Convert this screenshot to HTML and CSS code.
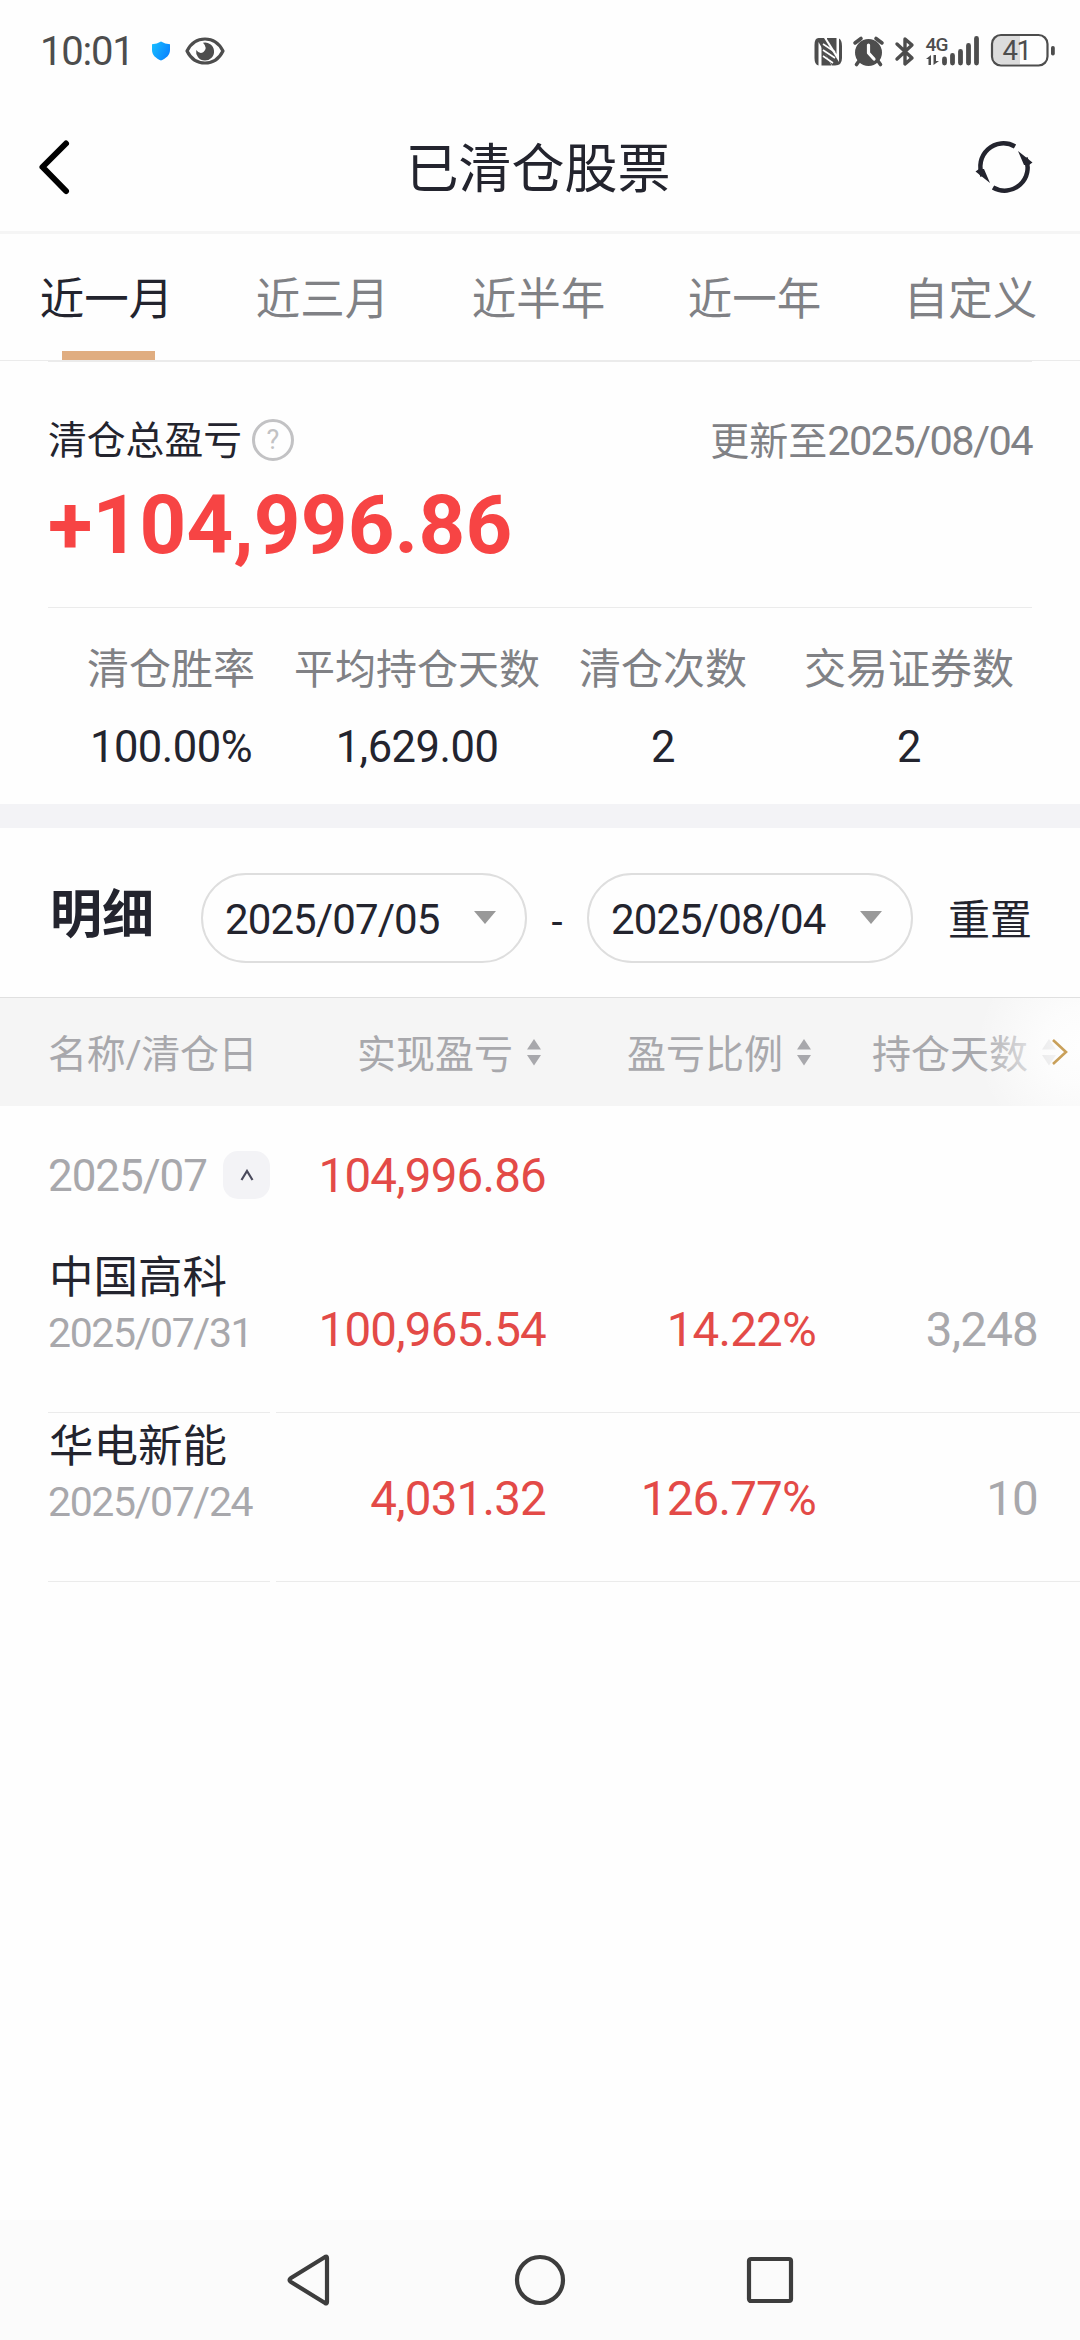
FILE: index.html
```html
<!DOCTYPE html>
<html lang="zh-CN">
<head>
<meta charset="utf-8">
<title>已清仓股票</title>
<link rel="stylesheet" href="styles.css">
</head>
<body>
<div class="screen">
  <div class="status">
    <span class="clock">10:01</span>
    <svg class="shield" width="20" height="20" viewBox="0 0 20 20"><defs><linearGradient id="g" x1="0" x2="1" y1="0" y2="0.5"><stop offset="0" stop-color="#18c0ff"/><stop offset="1" stop-color="#0a86ff"/></linearGradient></defs><path d="M10 0.5 Q14 3 19 3.2 V9 C19 14 15 17.500 10 19.500 C5 17.500 1 14 1 9 V3.200 Q6 3 10 0.500Z" fill="url(#g)"/></svg>
    <svg class="eye" width="40" height="28" viewBox="0 0 40 28"><path d="M2 14 C10 -2 30 -2 38 14 C30 30 10 30 2 14Z" fill="none" stroke="#4d4d4d" stroke-width="3.200" stroke-linejoin="round"/><path d="M18 5.800 A9 9 0 1 1 11.200 13 Q14.500 17.500 18.500 15 Q23 11 18 5.800Z" fill="#4d4d4d"/></svg>
    <div class="status-right">
      <svg class="sysicons" width="243" height="40" viewBox="813 31 243 40" fill="#4d4d4d">
        <path d="M818.500 38 H824 L839 62 V38.500 Q842 40 842 46 V58 Q842 65.500 835 65.500 H832 L818.500 42 V65.500 Q814.500 65 814.500 58 V45 Q814.500 38 818.500 38Z"/>
        <path d="M827 38 H836.500 V54 L827 39Z"/><path d="M821.500 46 L831.500 65.500 H821.500Z"/>
        <path d="M823 44 L835 52 M823 50 L835 58 M823 56 L833 63" stroke="#fff" stroke-width="1.600"/>
        <circle cx="868.500" cy="52.500" r="13.500"/><path d="M855 43 L861 38.500 M876 38.500 L882 43 M859 61 L856.500 64.500 M878 61 L880.500 64.500" stroke="#4d4d4d" stroke-width="3.600" stroke-linecap="round"/>
        <path d="M868.500 45 V53 L874 59" fill="none" stroke="#fff" stroke-width="3.200" stroke-linecap="round" stroke-linejoin="round"/>
        <path d="M897 44 L912 58 L905 64 V39 L912 45 L897 59" fill="none" stroke="#4d4d4d" stroke-width="3.400" stroke-linecap="round" stroke-linejoin="round"/>
        <text x="925.500" y="50.500" class="net">4G</text>
        <path d="M926 59 L931 55 V65 H928.500 V59Z M933.500 55 H936 V61 H939 L933.500 65Z"/>
        <path d="M944.500 59 V63 M952.500 55.500 V63 M960.500 51.500 V63 M968.500 45.500 V63 M976.500 38.500 V63" stroke="#4d4d4d" stroke-width="4.800" stroke-linecap="round"/>
        <path d="M1020 36 H1002 Q993 36 993 45 V55 Q993 64 1002 64 H1020Z" fill="#dcdcdc"/>
        <rect x="992" y="35" width="55.500" height="30.500" rx="9" fill="none" stroke="#4d4d4d" stroke-width="2.200"/>
        <rect x="1051" y="46" width="3.800" height="9.500" rx="1.800"/>
        <text x="1002.500" y="60" class="batt">41</text>
      </svg>
    </div>
  </div>

  <div class="titlebar">
    <svg class="back" width="36" height="60" viewBox="0 0 36 60"><path d="M30 6.500 L6.500 30 L30 54" fill="none" stroke="#000" stroke-width="6" stroke-linecap="round" stroke-linejoin="round"/></svg>
    <h1 class="title">已清仓股票</h1>
    <svg class="refresh" width="60" height="56" viewBox="0 0 60 56"><g fill="none" stroke="#23242e" stroke-width="4.500"><path d="M41 7.500 A23 23 0 0 0 8.500 37"/><path d="M19 48.500 A23 23 0 0 0 51.500 19"/></g><path d="M44 12 L58.500 23.500 L55 26 H50Z M16 44 L1.500 32.500 L5 30 H10Z" fill="#23242e"/></svg>
  </div>

  <div class="tabs">
    <span class="tab active">近一月</span><span class="tab">近三月</span><span class="tab">近半年</span><span class="tab">近一年</span><span class="tab">自定义</span>
  </div>

  <div class="summary">
    <div class="summary-top">
      <span class="sum-label">清仓总盈亏</span><span class="help">?</span>
      <span class="updated">更新至<span class="upd-date">2025/08/04</span></span>
    </div>
    <div class="total">+104,996.86</div>
    <div class="stats">
      <div class="stat"><span class="k">清仓胜率</span><span class="v">100.00%</span></div>
      <div class="stat"><span class="k k-long">平均持仓天数</span><span class="v">1,629.00</span></div>
      <div class="stat"><span class="k">清仓次数</span><span class="v">2</span></div>
      <div class="stat"><span class="k">交易证券数</span><span class="v">2</span></div>
    </div>
  </div>

  <div class="band"></div>

  <div class="filter">
    <h2 class="detail">明细</h2>
    <div class="pill"><span>2025/07/05</span><i class="down"></i></div>
    <span class="dash">-</span>
    <div class="pill"><span>2025/08/04</span><i class="down"></i></div>
    <span class="reset">重置</span>
  </div>

  <div class="thead row">
    <span class="th-name">名称/清仓日</span>
    <span class="th"><span>实现盈亏</span><svg class="sort" width="14" height="28" viewBox="0 0 14 28"><path d="M7 1 L14 11.500 H0Z M0 17 H14 L7 27.500Z"/></svg></span>
    <span class="th"><span>盈亏比例</span><svg class="sort" width="14" height="28" viewBox="0 0 14 28"><path d="M7 1 L14 11.500 H0Z M0 17 H14 L7 27.500Z"/></svg></span>
    <span class="th th-last"><span>持仓天数</span><svg class="sort" width="14" height="28" viewBox="0 0 14 28"><path d="M7 1 L14 11.500 H0Z M0 17 H14 L7 27.500Z"/></svg></span>
    <div class="fade"></div>
    <svg class="more" width="18" height="28" viewBox="0 0 18 28"><path d="M2 2 L15 14 L2 26" fill="none" stroke="#c9a05a" stroke-width="2.600"/></svg>
  </div>

  <div class="month row">
    <div class="month-name"><span>2025/07</span><span class="fold"><svg width="14" height="12" viewBox="0 0 14 12"><path d="M1.500 11 L7 2 L12.500 11" fill="none" stroke="#4a4a5c" stroke-width="2.200"/></svg></span></div>
    <span class="num red">104,996.86</span>
  </div>

  <div class="item row">
    <div class="stock"><span class="name">中国高科</span><span class="date">2025/07/31</span></div>
    <div class="figures"><span class="num red">100,965.54</span><span class="num red">14.22%</span><span class="num gray">3,248</span></div>
  </div>
  <div class="item row">
    <div class="stock"><span class="name">华电新能</span><span class="date">2025/07/24</span></div>
    <div class="figures"><span class="num red">4,031.32</span><span class="num red">126.77%</span><span class="num gray">10</span></div>
  </div>

  <div class="navbar">
    <svg width="50" height="54" viewBox="0 0 50 54"><path d="M42 5 V49 Q42 51 40 50 L6 29 Q3 27 6 25 L40 4 Q42 3 42 5Z" /></svg>
    <svg width="54" height="54" viewBox="0 0 54 54"><circle cx="27" cy="27" r="23"/></svg>
    <svg width="50" height="54" viewBox="0 0 50 54"><rect x="4" y="6" width="42" height="42" rx="2"/></svg>
  </div>
</div>
</body>
</html>
```
FILE: styles.css
```css
* { box-sizing: border-box; margin: 0; padding: 0; }
body {
  width: 1080px;
  background: #fefefe;
  color: #23242e;
  font-family: Roboto, "Noto Sans CJK SC", sans-serif;
}
svg { display: block; flex: none; }
.screen { width: 1080px; height: 2340px; display: flex; flex-direction: column; overflow: hidden; }

.status { height: 102px; display: flex; align-items: center; padding: 0 24px 0 40px; }
.clock { width: 111px; font-size: 40px; line-height: 48px; letter-spacing: -1.2px; color: #4d4d4d; padding-top: 1px; }
.eye { margin-left: 14px; }
.status-right { margin-left: auto; }
.sysicons { overflow: visible; }
.net { font: 500 19px Roboto, sans-serif; letter-spacing: -0.8px; }
.batt { font: 400 27.5px Roboto, sans-serif; letter-spacing: -1.5px; }

.titlebar { height: 132px; display: flex; align-items: center; justify-content: space-between; padding: 0 46px 0 36px; border-bottom: 3px solid #f5f5f5; }
.title { font-size: 53px; font-weight: 400; line-height: 72px; margin-left: 30px; padding-top: 7px; }

.tabs { height: 127px; display: grid; grid-template-columns: repeat(5, 1fr); border-bottom: 1px solid #ebebeb; }
.tab { display: flex; flex-direction: column; align-items: center; justify-content: space-between; padding-top: 33px; font-size: 44.500px; line-height: 66px; color: #808185; text-indent: -3px; }
.tab.active { color: #23242e; }
.tab.active::after { content: ""; width: 93px; height: 9px; background: #e0ad80; }

.summary { height: 443px; padding: 0 48px; }
.summary-top { height: 98px; display: flex; align-items: center; border-top: 1px solid #ebebeb; padding-top: 58px; }
.sum-label { font-size: 38.800px; line-height: 40px; margin-top: 2px; }
.help { width: 42px; height: 42px; margin-left: 10px; border: 3px solid #c2c2c4; border-radius: 50%; color: #c2c2c4; font-size: 27px; line-height: 37px; text-align: center; }
.updated { margin-left: auto; display: flex; align-items: baseline; font-size: 39px; line-height: 40px; color: #808185; padding-top: 4px; }
.upd-date { font-size: 41.500px; letter-spacing: -1.600px; }
.total { height: 149px; padding-top: 18px; border-bottom: 1px solid #ebebeb; font-size: 81.500px; font-weight: 700; line-height: 96px; letter-spacing: 0.200px; color: #f74444; }
.stats { display: grid; grid-template-columns: repeat(4, 246px); padding-top: 37px; }
.stat { display: flex; flex-direction: column; align-items: center; }
.k { font-size: 42px; line-height: 50px; color: #808185; white-space: nowrap; }
.k-long { font-size: 41px; }
.v { font-size: 43.500px; line-height: 54px; margin-top: 26px; letter-spacing: -0.500px; }

.band { height: 24px; background: #f3f3f6; }

.filter { height: 169px; display: flex; align-items: center; padding: 10px 48px 0 50px; }
.detail { width: 151px; font-size: 52px; font-weight: 700; line-height: 60px; margin-top: -3px; }
.pill { width: 326px; height: 90px; border: 2px solid #dedede; border-radius: 45px; display: flex; align-items: center; justify-content: space-between; padding: 0 29px 0 22px; font-size: 42px; letter-spacing: -0.900px; }
.pill span { padding-top: 3px; }
.down { border: 11px solid transparent; border-top: 13px solid #999; border-bottom: 0; }
.dash { width: 60px; text-align: center; font-size: 40px; padding-top: 10px; }
.reset { margin-left: auto; font-size: 42px; line-height: 50px; padding-top: 7px; }

.row { display: grid; grid-template-columns: 228px 270px 270px 222px; padding-left: 48px; }
.thead { position: relative; height: 109px; align-items: center; border-top: 1px solid #e0e0e0; background: #f5f5f5; font-size: 39px; line-height: 54px; color: #a8a8ac; white-space: nowrap; }
.th-name, .th span { padding-top: 6px; }
.th-name { letter-spacing: -0.300px; }
.th { display: flex; align-items: center; justify-content: flex-end; gap: 14px; padding-right: 5px; }
.th-last { padding-right: 0; margin-right: -18px; }
.sort { fill: #a8a8ac; }
.fade { position: absolute; top: 0; right: 0; width: 110px; height: 108px; background: radial-gradient(circle 104px at 100% 45%, #fefefe 0, rgba(254, 254, 254, 0.800) 35%, rgba(254, 254, 254, 0) 100%); }
.more { position: absolute; right: 11px; top: 40px; }

.month { height: 138px; align-items: center; }
.month-name { display: flex; align-items: center; justify-content: space-between; padding-right: 6px; font-size: 44px; letter-spacing: -1.100px; color: #a8a8ac; }
.month-name span:first-child { padding-top: 2px; }
.fold { width: 47px; height: 48px; border-radius: 15px; background: #f3f3f6; display: flex; align-items: center; justify-content: center; }
.num { font-size: 47.500px; line-height: 56px; letter-spacing: -0.800px; text-align: right; padding-top: 1px; }
.red { color: #e34a47; }
.gray { color: #a8a8ac; }
.item { height: 169px; grid-template-columns: 222px 804px; column-gap: 6px; }
.stock { display: flex; flex-direction: column; border-bottom: 1px solid #ebebeb; padding-top: 4px; }
.name { font-size: 44.500px; line-height: 60px; padding-left: 1px; }
.date { font-size: 41px; line-height: 50px; letter-spacing: -1.400px; color: #a8a8ac; }
.figures { display: grid; grid-template-columns: 270px 270px 222px; border-bottom: 1px solid #ebebeb; padding-top: 57px; }

.navbar { margin-top: auto; height: 120px; background: #fbfbfb; display: flex; align-items: center; justify-content: center; gap: 178px; }
.navbar svg { fill: none; stroke: #3d3d3d; stroke-width: 4.200; }
```
